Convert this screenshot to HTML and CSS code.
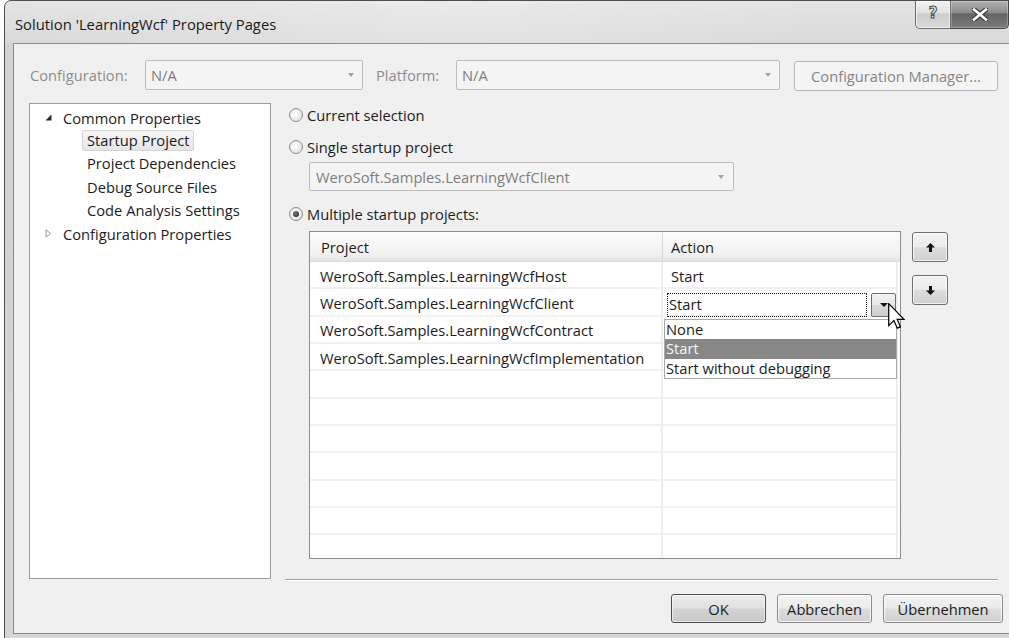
FILE: index.html
```html
<!DOCTYPE html>
<html lang="de">
<head>
<meta charset="utf-8">
<title>Solution 'LearningWcf' Property Pages</title>
<link rel="stylesheet" href="styles.css">
</head>
<body>
<div class="window">
  <div class="titlebar">
    <span class="title">Solution 'LearningWcf' Property Pages</span>
    <div class="caption-buttons">
      <div class="cap help"><span class="help-glyph">?</span></div>
      <div class="cap close">
        <svg width="16" height="13" viewBox="0 0 16 13"><path d="M2 1.5 L14 11.5 M14 1.5 L2 11.5" stroke="#3a3a3a" stroke-width="5" stroke-linecap="square"/><path d="M2 1.5 L14 11.5 M14 1.5 L2 11.5" stroke="#ffffff" stroke-width="2.6" stroke-linecap="square"/></svg>
      </div>
    </div>
  </div>

  <div class="client">
    <div class="config-row">
      <span class="dim-label cfg-label">Configuration:</span>
      <div class="combo disabled cfg-combo"><span class="combo-text">N/A</span><span class="combo-arrow"></span></div>
      <span class="dim-label plat-label">Platform:</span>
      <div class="combo disabled plat-combo"><span class="combo-text">N/A</span><span class="combo-arrow"></span></div>
      <div class="btn disabled cfg-mgr">Configuration Manager...</div>
    </div>

    <div class="main">
      <div class="tree">
        <div class="tree-row node">
          <svg class="twisty" width="7" height="7" viewBox="0 0 7 7"><polygon points="6.5,0.5 6.5,6.5 0.5,6.5" fill="#262626"/></svg>
          <span>Common Properties</span>
        </div>
        <div class="tree-row leaf"><span class="leaf-label selected">Startup Project</span></div>
        <div class="tree-row leaf"><span class="leaf-label">Project Dependencies</span></div>
        <div class="tree-row leaf"><span class="leaf-label">Debug Source Files</span></div>
        <div class="tree-row leaf"><span class="leaf-label">Code Analysis Settings</span></div>
        <div class="tree-row node">
          <svg class="twisty" width="7" height="9" viewBox="0 0 7 9"><polygon points="1,0.8 5.6,4.5 1,8.2" fill="none" stroke="#9a9a9a" stroke-width="1"/></svg>
          <span>Configuration Properties</span>
        </div>
      </div>

      <div class="page">
        <div class="radio-row first"><span class="radio"></span>Current selection</div>
        <div class="radio-row second"><span class="radio"></span>Single startup project</div>
        <div class="combo disabled single-combo"><span class="combo-text">WeroSoft.Samples.LearningWcfClient</span><span class="combo-arrow"></span></div>
        <div class="radio-row third"><span class="radio checked"></span>Multiple startup projects:</div>

        <div class="grid-area">
          <div class="grid">
            <div class="grid-head">
              <div class="hcell col-project">Project</div>
              <div class="hcell col-action">Action</div>
            </div>
            <div class="grid-row">
              <div class="cell col-project">WeroSoft.Samples.LearningWcfHost</div>
              <div class="cell col-action">Start</div>
            </div>
            <div class="grid-row">
              <div class="cell col-project">WeroSoft.Samples.LearningWcfClient</div>
              <div class="cell col-action editing">
                <span class="edit-box">Start</span>
                <span class="drop-btn"><span class="drop-tri"></span></span>
              </div>
            </div>
            <div class="grid-row">
              <div class="cell col-project">WeroSoft.Samples.LearningWcfContract</div>
              <div class="cell col-action"></div>
            </div>
            <div class="grid-row">
              <div class="cell col-project">WeroSoft.Samples.LearningWcfImplementation</div>
              <div class="cell col-action"></div>
            </div>
            <div class="grid-row"><div class="cell col-project"></div><div class="cell col-action"></div></div>
            <div class="grid-row"><div class="cell col-project"></div><div class="cell col-action"></div></div>
            <div class="grid-row"><div class="cell col-project"></div><div class="cell col-action"></div></div>
            <div class="grid-row"><div class="cell col-project"></div><div class="cell col-action"></div></div>
            <div class="grid-row"><div class="cell col-project"></div><div class="cell col-action"></div></div>
            <div class="grid-row"><div class="cell col-project"></div><div class="cell col-action"></div></div>
            <div class="grid-row"><div class="cell col-project"></div><div class="cell col-action"></div></div>

            <div class="drop-list">
              <div class="drop-item">None</div>
              <div class="drop-item active">Start</div>
              <div class="drop-item">Start without debugging</div>
            </div>
          </div>

          <div class="move-buttons">
            <div class="btn move">
              <svg width="9" height="9" viewBox="0 0 9 9"><path d="M4.5 0 L9 4.6 L6 4.6 L6 9 L3 9 L3 4.6 L0 4.6 Z" fill="#111"/></svg>
            </div>
            <div class="btn move">
              <svg width="9" height="9" viewBox="0 0 9 9"><path d="M4.5 9 L9 4.4 L6 4.4 L6 0 L3 0 L3 4.4 L0 4.4 Z" fill="#111"/></svg>
            </div>
          </div>
        </div>
      </div>
    </div>

    <div class="footer">
      <div class="btn dialog default">OK</div>
      <div class="btn dialog">Abbrechen</div>
      <div class="btn dialog wide">Übernehmen</div>
    </div>
  </div>
</div>

<svg class="cursor" width="17" height="26" viewBox="0 0 12.4 19">
  <path d="M0.5 0.5 L0.5 16.5 L4.3 12.8 L6.8 18.4 L9.1 17.4 L6.7 11.9 L11.7 11.9 Z" fill="#fff" stroke="#000" stroke-width="0.9" stroke-linejoin="miter"/>
</svg>
</body>
</html>
```

FILE: styles.css
```css
* { box-sizing: border-box; }

html, body {
  margin: 0;
  padding: 0;
}

body {
  position: relative;
  width: 1009px;
  height: 638px;
  overflow: hidden;
  background: #ffffff;
  font-family: "Open Sans", "Noto Sans", sans-serif;
  font-size: 14.7px;
  color: #1c1c1c;
}

/* ---------- window frame ---------- */
.window {
  margin: 0 0 0 4px;
  width: 1016px;
  height: 640px;
  border: 1px solid #4d4d4d;
  border-radius: 7px 7px 0 0;
  background: linear-gradient(#e4e4e4, #d9d9d9 42px, #d2d2d2 43px, #d6d6d6);
  display: flex;
  flex-direction: column;
}

.titlebar {
  height: 42px;
  display: flex;
  align-items: flex-start;
  padding-left: 10px;
  background: linear-gradient(90deg, rgba(255,255,255,0) 0%, rgba(255,255,255,0.25) 45%, rgba(255,255,255,0) 80%);
}

.title {
  margin-top: 13px;
  font-size: 14.8px;
  line-height: 20px;
  color: #1a1a1a;
}

.caption-buttons {
  margin-left: auto;
  margin-right: 10px;
  display: flex;
}

.cap {
  height: 28px;
  display: flex;
  align-items: center;
  justify-content: center;
}

.help {
  width: 36px;
  border: 1px solid #6d6d6d;
  border-top: none;
  border-radius: 0 0 0 5px;
  background: linear-gradient(#f3f3f3, #e0e0e0 45%, #cdcdcd 47%, #dadada);
  box-shadow: inset 0 0 0 1px rgba(255,255,255,0.6);
}

.help-glyph {
  font-family: "DejaVu Sans", sans-serif;
  font-size: 15px;
  font-weight: bold;
  color: #f4f4f4;
  -webkit-text-stroke: 1px #4a4a4a;
  line-height: 1;
  margin-top: -2px;
}

.close {
  width: 58px;
  border: 1px solid #474747;
  border-top: none;
  border-left: none;
  border-radius: 0 0 5px 0;
  background: linear-gradient(#b2b2b2, #8a8a8a 45%, #646464 47%, #7c7c7c);
  box-shadow: inset 0 0 0 1px rgba(255,255,255,0.25);
}

/* ---------- client area ---------- */
.client {
  margin: 0 8px;
  height: 591px;
  border: 1px solid #8b8b8b;
  background: #f0f0f0;
  display: flex;
  flex-direction: column;
}

.config-row {
  display: flex;
  align-items: flex-start;
  height: 31px;
  margin-top: 16px;
  padding-left: 16px;
}

.dim-label {
  color: #8d8d8d;
  line-height: 30px;
}

.cfg-label { width: 115px; }
.plat-label { width: 80px; margin-left: 13px; }

.combo {
  height: 30px;
  display: flex;
  align-items: center;
  border: 1px solid #bdbdbd;
  border-radius: 2px;
  background: #f4f4f4;
  padding: 0 8px 0 5px;
}

.combo.disabled .combo-text { color: #7d7d7d; }

.combo-arrow {
  margin-left: auto;
  width: 0;
  height: 0;
  border-left: 3.5px solid transparent;
  border-right: 3.5px solid transparent;
  border-top: 4px solid #a3a3a3;
}

.cfg-combo { width: 218px; }
.plat-combo { width: 324px; }

.btn {
  display: flex;
  align-items: center;
  justify-content: center;
  border: 1px solid #707070;
  border-radius: 3px;
  background: linear-gradient(#f3f3f3, #ebebeb 48%, #dddddd 52%, #d0d0d0);
  box-shadow: inset 0 0 0 1px rgba(255,255,255,0.75);
  color: #1c1c1c;
}

.btn.disabled {
  border-color: #b6b6b6;
  background: #f4f4f4;
  box-shadow: none;
  color: #858585;
}

.cfg-mgr {
  width: 204px;
  height: 30px;
  margin-top: 1px;
  margin-left: 14px;
}

/* ---------- main area ---------- */
.main {
  display: flex;
  margin-top: 12px;
  height: 477px;
  padding-left: 15px;
  padding-right: 12px;
}

.tree {
  width: 242px;
  height: 476px;
  border: 1px solid #9c9c9c;
  background: #ffffff;
  padding-top: 2px;
}

.tree-row {
  height: 23.2px;
  display: flex;
  align-items: center;
  white-space: nowrap;
}

.tree-row.node { padding-left: 15px; }
.twisty { margin-right: 11px; }

.tree-row.leaf { padding-left: 52px; }

.leaf-label {
  padding: 0 4px;
  border: 1px solid transparent;
  line-height: 19px;
}

.leaf-label.selected {
  border-color: #d4d4d4;
  border-radius: 2px;
  background: linear-gradient(#f7f7f7, #e6e6e6);
}

.page {
  flex: 1;
  margin-left: 14px;
  padding-left: 4px;
  padding-top: 1px;
  border-bottom: 1px solid #a4a4a4;
  box-shadow: 0 1px 0 #ffffff;
  display: flex;
  flex-direction: column;
}

.radio-row {
  height: 22px;
  display: flex;
  align-items: center;
}

.radio-row.second { margin-top: 10px; }
.radio-row.third { margin-top: 12px; }

.radio {
  width: 14px;
  height: 14px;
  margin-right: 4px;
  border: 1px solid #8e8e8e;
  border-radius: 50%;
  background: radial-gradient(circle at 40% 35%, #ffffff 0%, #f0f0f0 45%, #d2d2d2 100%);
  box-shadow: inset 0 0 0 1px #e6e6e6;
  position: relative;
}

.radio.checked::after {
  content: "";
  position: absolute;
  left: 3px;
  top: 3px;
  width: 6px;
  height: 6px;
  border-radius: 50%;
  background: radial-gradient(circle at 40% 35%, #7a7a7a, #1e1e1e);
}

.single-combo {
  width: 425px;
  height: 29px;
  margin-top: 4px;
  margin-left: 20px;
  padding-left: 6px;
  padding-right: 9px;
}

/* ---------- project grid ---------- */
.grid-area {
  display: flex;
  align-items: flex-start;
  margin-top: 6px;
  margin-left: 20px;
}

.grid {
  position: relative;
  width: 592px;
  height: 328px;
  border: 1px solid #8c8c8c;
  background: #ffffff;
  overflow: hidden;
}

.grid-head {
  display: flex;
  height: 30px;
  background: linear-gradient(#fbfbfb, #f2f2f2 75%, #e4e4e4);
  border-bottom: 1px solid #dcdcdc;
}

.hcell {
  display: flex;
  align-items: center;
  padding-top: 1px;
}

.hcell.col-project {
  width: 353px;
  padding-left: 11px;
  border-right: 1px solid #d8d8d8;
}

.hcell.col-action {
  width: 235px;
  padding-left: 8px;
}

.grid-row {
  display: flex;
  height: 27.33px;
}

.cell {
  display: flex;
  align-items: center;
  padding-top: 2px;
  border-bottom: 2px solid #f1f1f1;
  white-space: nowrap;
}

.cell.col-project {
  width: 353px;
  padding-left: 10px;
  border-right: 2px solid #eeeeee;
}

.cell.col-action {
  width: 235px;
  padding-left: 8px;
  border-right: 2px solid #eeeeee;
}

.cell.editing {
  align-items: flex-start;
  padding: 4px 0 0 4px;
}

.edit-box {
  width: 200px;
  height: 24px;
  border: 1px dotted #1a1a1a;
  padding-left: 1px;
  line-height: 21px;
}

.drop-btn {
  width: 25px;
  height: 24px;
  margin-left: 4px;
  border: 1px solid #707070;
  border-radius: 2px;
  background: linear-gradient(#f3f3f3, #e8e8e8 48%, #d9d9d9 52%, #cfcfcf);
  display: flex;
  align-items: center;
  justify-content: center;
}

.drop-tri {
  width: 0;
  height: 0;
  border-left: 4px solid transparent;
  border-right: 4px solid transparent;
  border-top: 4px solid #111111;
}

.drop-list {
  position: absolute;
  left: 354px;
  top: 87px;
  width: 233px;
  height: 60px;
  border: 1px solid #a9a9a9;
  background: #ffffff;
}

.drop-item {
  height: 19.3px;
  line-height: 19px;
  padding-left: 1px;
  white-space: nowrap;
}

.drop-item.active {
  background: #888888;
  color: #f6f6f6;
}

.move-buttons {
  margin-left: 11px;
  margin-top: 1px;
  display: flex;
  flex-direction: column;
  gap: 13px;
}

.btn.move {
  width: 36px;
  height: 30px;
}

/* ---------- dialog buttons ---------- */
.footer {
  display: flex;
  justify-content: flex-end;
  margin-top: 14px;
  padding-right: 7px;
  gap: 11px;
}

.btn.dialog {
  width: 95px;
  height: 29px;
  border-color: #8a8a8a;
}

.btn.dialog.default {
  border-color: #4e4e4e;
  background: linear-gradient(#ebebeb, #e2e2e2 48%, #d3d3d3 52%, #c8c8c8);
  box-shadow: inset 0 0 0 1px rgba(255,255,255,0.6);
}

.btn.dialog.wide { width: 120px; }

/* ---------- pointer ---------- */
.cursor {
  position: absolute;
  left: 888px;
  top: 303px;
}
```
